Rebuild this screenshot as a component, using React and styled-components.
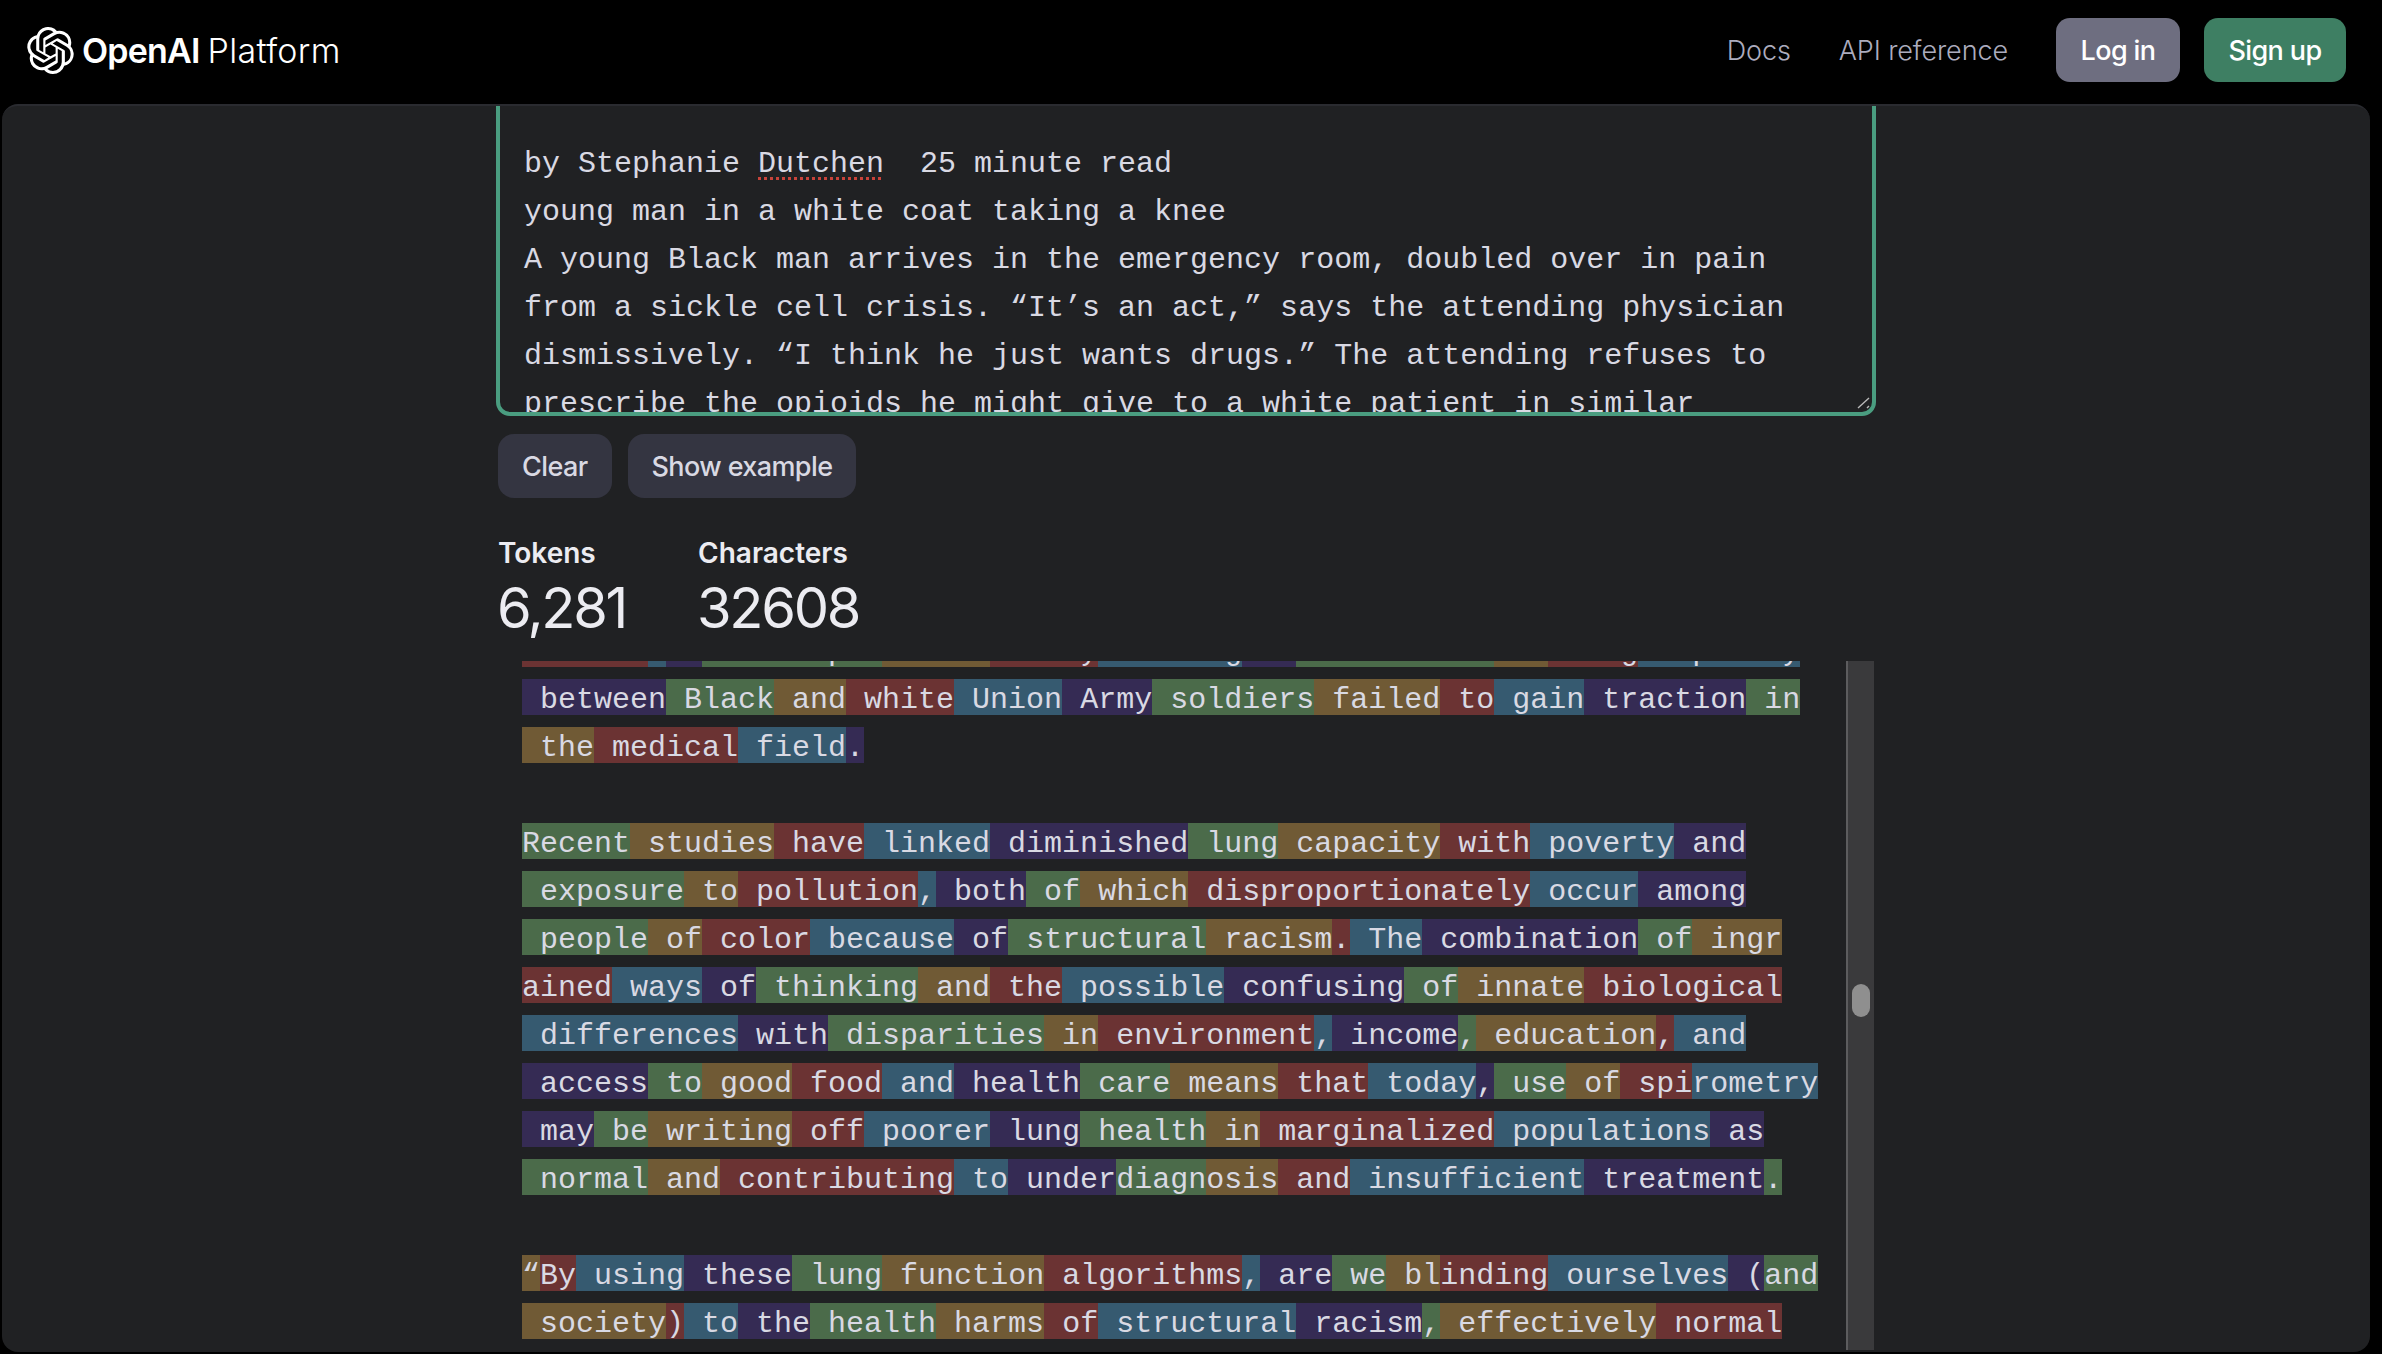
import styled, { createGlobalStyle } from 'styled-components';
import { SiOpenai } from 'react-icons/si';

const GlobalStyle = createGlobalStyle`
html, body {
  margin: 0;
  height: 100%;
  background: #000;
  overflow: hidden;
}
* { box-sizing: border-box; }
`

const Page = styled.div`
display: flex;
flex-direction: column;
height: 1354px;
padding: 0 12px 2px 2px;
background: #000;
font-family: Inter, "Liberation Sans", sans-serif;
`

const TopBar = styled.header`
display: flex;
align-items: center;
justify-content: space-between;
height: 104px;
flex: none;
padding: 0 24px 4px 25px;
`

const Brand = styled.div`
display: flex;
align-items: center;
gap: 8px;
color: #fff;
font-size: 34px;
letter-spacing: -0.8px;
`

const BrandName = styled.span`
font-weight: 600;
`

const BrandProduct = styled.span`
font-weight: 300;
letter-spacing: 0.3px;
margin-left: 8px;
`

const Nav = styled.nav`
display: flex;
align-items: center;
`

const NavLink = styled.a`
color: #acacbe;
font-size: 27px;
font-weight: 300;
letter-spacing: -0.1px;
margin-right: ${p => p.$gap}px;
`

const AuthButton = styled.button`
height: 64px;
width: ${p => p.$width}px;
margin-left: ${p => p.$left}px;
border: none;
border-radius: 14px;
background: ${p => p.$bg};
color: #fff;
font-family: inherit;
font-size: 27px;
font-weight: 500;
letter-spacing: -0.6px;
`

const Panel = styled.main`
flex: 1;
min-height: 0;
display: flex;
flex-direction: column;
align-items: center;
overflow: hidden;
background: #202123;
border-top: 2px solid #2a2b30;
border-radius: 16px;
`

const Column = styled.div`
display: flex;
flex-direction: column;
width: 1380px;
height: 100%;
`

const ArticleBox = styled.div`
position: relative;
flex: none;
height: 326px;
margin-top: -16px;
padding: 46px 24px 0 24px;
border: 4px solid #4a9d80;
border-radius: 14px;
color: #d9d9e3;
font-family: "Liberation Mono", monospace;
font-size: 30px;
line-height: 48px;
white-space: pre;
overflow: hidden;
`

const ResizeGrip = styled.svg`
position: absolute;
right: 0;
bottom: 0;
width: 16px;
height: 16px;
`

const Misspelt = styled.span`
text-decoration: underline dotted #c8433a 3px;
text-underline-offset: 5px;
`

const ActionRow = styled.div`
display: flex;
flex: none;
gap: 16px;
margin: 18px 0 0 2px;
`

const ActionButton = styled.button`
height: 64px;
padding: 0 24px;
border: none;
border-radius: 16px;
background: #343541;
color: #d9d9e3;
font-family: inherit;
font-size: 27px;
font-weight: 500;
letter-spacing: -0.6px;
`

const Stats = styled.div`
display: flex;
flex: none;
gap: 72px;
margin: 37px 0 0 2px;
`

const Stat = styled.div`
display: flex;
flex-direction: column;
min-width: 128px;
color: #ececf1;
`

const StatLabel = styled.div`
font-size: 28px;
font-weight: 600;
letter-spacing: 0;
line-height: 36px;
`

const StatValue = styled.div`
font-size: 56px;
font-weight: 400;
letter-spacing: -2.3px;
line-height: 68px;
margin: 3px 0 0 -1px;
`

const TokenViewport = styled.div`
position: relative;
flex: 1;
min-height: 0;
margin: 19px 0 2px;
padding-left: 26px;
overflow: hidden;
`

const TokenList = styled.div`
margin-top: -30px;
color: #d9d9e3;
font-family: "Liberation Mono", monospace;
font-size: 30px;
`

const TokenRow = styled.div`
display: flex;
height: 36px;
margin-bottom: 12px;
`

const Token = styled.span`
display: block;
height: 36px;
line-height: 42px;
white-space: pre;
background: ${p => p.$bg};
`

const ScrollTrack = styled.div`
position: absolute;
top: 0;
bottom: 0;
right: 2px;
width: 28px;
background: #3a3a3c;
border-left: 2px solid #5c5c5e;
`

const ScrollThumb = styled.div`
position: absolute;
top: 323px;
left: 4px;
width: 18px;
height: 33px;
border-radius: 9px;
background: #8f8f8f;
`

const TONES = ['#6b3333', '#365a70', '#352b54', '#4b6b4a', '#705a35']

const ROWS = [
  [" Gould'", 's', ' 1', '860s repor', 't from', ' study', ' showing', ' no', ' difference', ' in', ' lung', ' capacity'],
  [' between', ' Black', ' and', ' white', ' Union', ' Army', ' soldiers', ' failed', ' to', ' gain', ' traction', ' in'],
  [' the', ' medical', ' field', '.'],
  [],
  ['Recent', ' studies', ' have', ' linked', ' diminished', ' lung', ' capacity', ' with', ' poverty', ' and'],
  [' exposure', ' to', ' pollution', ',', ' both', ' of', ' which', ' disproportionately', ' occur', ' among'],
  [' people', ' of', ' color', ' because', ' of', ' structural', ' racism', '.', ' The', ' combination', ' of', ' ingr'],
  ['ained', ' ways', ' of', ' thinking', ' and', ' the', ' possible', ' confusing', ' of', ' innate', ' biological'],
  [' differences', ' with', ' disparities', ' in', ' environment', ',', ' income', ',', ' education', ',', ' and'],
  [' access', ' to', ' good', ' food', ' and', ' health', ' care', ' means', ' that', ' today', ',', ' use', ' of', ' spi', 'rometry'],
  [' may', ' be', ' writing', ' off', ' poorer', ' lung', ' health', ' in', ' marginalized', ' populations', ' as'],
  [' normal', ' and', ' contributing', ' to', ' under', 'diagn', 'osis', ' and', ' insufficient', ' treatment', '.'],
  [],
  ['“', 'By', ' using', ' these', ' lung', ' function', ' algorithms', ',', ' are', ' we', ' bl', 'inding', ' ourselves', ' (', 'and'],
  [' society', ')', ' to', ' the', ' health', ' harms', ' of', ' structural', ' racism', ',', ' effectively', ' normal'],
]

const ARTICLE_END = `
young man in a white coat taking a knee
A young Black man arrives in the emergency room, doubled over in pain
from a sickle cell crisis. “It’s an act,” says the attending physician
dismissively. “I think he just wants drugs.” The attending refuses to
prescribe the opioids he might give to a white patient in similar`

const TokenRows = () => {
  let count = 0
  return ROWS.map((row, i) => (
    <TokenRow key={i}>
      {row.map((text, j) => (
        <Token key={j} $bg={TONES[count++ % TONES.length]}>{text}</Token>
      ))}
    </TokenRow>
  ))
}

const App = () => {
  return (
    <Page>
      <GlobalStyle />
      <TopBar>
        <Brand>
          <SiOpenai size={47} />
          <span>
            <BrandName>OpenAI</BrandName>
            <BrandProduct>Platform</BrandProduct>
          </span>
        </Brand>
        <Nav>
          <NavLink $gap={48}>Docs</NavLink>
          <NavLink $gap={0}>API reference</NavLink>
          <AuthButton $width={124} $left={48} $bg="#6e6e80">Log in</AuthButton>
          <AuthButton $width={142} $left={24} $bg="#3e7f63">Sign up</AuthButton>
        </Nav>
      </TopBar>
      <Panel>
        <Column>
          <ArticleBox>
            by Stephanie <Misspelt>Dutchen</Misspelt>  25 minute read{ARTICLE_END}
            <ResizeGrip viewBox="0 0 16 16">
              <path d="M2 12 L13 2 M11 12 L13 10" stroke="#b8b8b8" strokeWidth="1.4" fill="none" />
            </ResizeGrip>
          </ArticleBox>
          <ActionRow>
            <ActionButton>Clear</ActionButton>
            <ActionButton>Show example</ActionButton>
          </ActionRow>
          <Stats>
            <Stat>
              <StatLabel>Tokens</StatLabel>
              <StatValue>6,281</StatValue>
            </Stat>
            <Stat>
              <StatLabel>Characters</StatLabel>
              <StatValue>32608</StatValue>
            </Stat>
          </Stats>
          <TokenViewport>
            <TokenList>
              <TokenRows />
            </TokenList>
            <ScrollTrack>
              <ScrollThumb />
            </ScrollTrack>
          </TokenViewport>
        </Column>
      </Panel>
    </Page>
  )
}

export default App;
